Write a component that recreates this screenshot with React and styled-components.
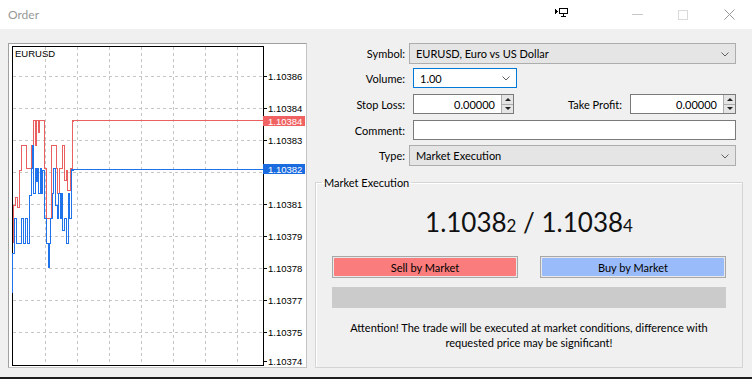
import styled, { createGlobalStyle } from "styled-components";

const GlobalStyle = createGlobalStyle`
  html, body {
    margin: 0;
    padding: 0;
    background: #1e1e1e;
  }
  body {
    font-family: Lato, "Liberation Sans", sans-serif;
    font-size: 11px;
    color: #000;
  }
`;

const RED = "#ea6060";
const BLUE = "#1f72ea";

const priceLabels = [
  ["1.10386", 76],
  ["1.10384", 108],
  ["1.10383", 140],
  ["1.10381", 204],
  ["1.10379", 236],
  ["1.10378", 268],
  ["1.10377", 300],
  ["1.10375", 332],
  ["1.10374", 361],
];
const gridX = [45, 77, 109, 141, 173, 205, 237];
const gridY = [76, 108, 140, 172, 204, 236, 268, 300, 332];

// step series drawn left of the current price, in page pixels
const askPath =
  "M13.5,243 V205 H15.5 V197 H17.5 V207 H19.5 V170 H21.5 V145 H26.5 V168 H31.5 V145 H33.5 V120 H35.5 V145 H36.5 V120 H38.5 V132 H39.5 V120.5 H44.5 V168 H46.5 V218 H51.5 V145 H56.5 V168 H57.5 V193 H59.5 V168 H62.5 V145 H64.5 V180 H66.5 V170 H67.5 V190 H70.5 V168 H72.5 V121 H74";
const bidPath =
  "M12.5,293 V253 H14.5 V218 H16.5 V243 H21.5 V218 H23.5 V243 H25.5 V218 H27.5 V243 H29.5 V195 H31.5 V168 H32.5 V145 H33.5 V193 H35.5 V168 H36.5 V181 H37.5 V168 H38.5 V193 H40.5 V168 H41.5 V193 H42.5 V170 H44.5 V218 H46.5 V243 H48.5 V267 H49.5 V243 H50.5 V218 H52.5 V193 H53.5 V168 H55.5 V205 H57.5 V218 H58.5 V193 H60.5 V218 H61.5 V193 H62.5 V230 H64.5 V218 H66.5 V243 H68.5 V193 H69.5 V218 H71.5 V170 H74";

const Window = styled.div`
  width: 752px;
  height: 377px;
  background: #f0f0f0;
  display: flex;
  flex-direction: column;
`;

const TitleBar = styled.div`
  height: 29px;
  flex-shrink: 0;
  background: #fff;
  display: flex;
  align-items: center;
`;

const Title = styled.div`
  flex: 1;
  padding-left: 8px;
  color: #999;
  font-size: 12px;
`;

const MonitorSlot = styled.div`
  width: 14px;
  height: 29px;
  display: flex;
  align-items: center;
  margin-right: 45px;
  padding-bottom: 4px;
  box-sizing: border-box;
`;

const CaptionButton = styled.div`
  width: 46px;
  height: 29px;
  display: flex;
  align-items: center;
  justify-content: center;
`;

const Body = styled.div`
  flex: 1;
  display: flex;
  gap: 8px;
  padding: 14px 9px 0 8px;
`;

const ChartPanel = styled.div`
  width: 299px;
  height: 325px;
  box-sizing: border-box;
  background: #fff;
  border: 1px solid #c4c4c4;
  border-left-color: #a0a0a0;
  border-top-color: #a0a0a0;
  flex-shrink: 0;

  svg {
    display: block;
  }
`;

const RightPanel = styled.div`
  width: 428px;
  display: flex;
  flex-direction: column;
`;

const Row = styled.div`
  display: flex;
  align-items: center;
  height: ${(p) => p.$h || 20}px;
  margin-top: ${(p) => p.$mt || 0}px;
  padding-right: 7px;
`;

const Label = styled.div`
  width: ${(p) => p.$w || 90}px;
  flex: ${(p) => (p.$grow ? 1 : "none")};
  text-align: right;
  white-space: nowrap;
`;

const Combo = styled.div`
  position: relative;
  box-sizing: border-box;
  height: 100%;
  width: ${(p) => p.$w}px;
  margin-left: ${(p) => p.$ml}px;
  display: flex;
  align-items: center;
  padding-left: 6px;
  background: ${(p) => (p.$editable ? "#fff" : "#e5e5e5")};
  border: 1px solid ${(p) => (p.$focused ? "#0078d7" : "#adadad")};
`;

const Chevron = styled.svg`
  position: absolute;
  right: 6px;
  top: 50%;
  margin-top: -2px;
`;

const TextBox = styled.div`
  box-sizing: border-box;
  height: 100%;
  width: ${(p) => p.$w}px;
  margin-left: ${(p) => p.$ml}px;
  background: #fff;
  border: 1px solid #7a7a7a;
  display: flex;
  align-items: center;
  justify-content: flex-end;
`;

const NumberText = styled.span`
  padding-right: 6px;
`;

const Spin = styled.div`
  width: 12px;
  height: 100%;
  box-sizing: border-box;
  display: flex;
  flex-direction: column;
  border-left: 1px solid #adadad;
  background: #e5e5e5;
`;

const SpinHalf = styled.div`
  flex: 1;
  display: flex;
  align-items: center;
  justify-content: center;
  border-top: ${(p) => (p.$down ? "1px solid #adadad" : "none")};

  &::after {
    content: "";
    border-left: 3px solid transparent;
    border-right: 3px solid transparent;
    ${(p) =>
      p.$down ? "border-top: 3px solid #222;" : "border-bottom: 3px solid #222;"}
  }
`;

const Group = styled.fieldset`
  margin: 9px 0 0 0;
  padding: 0 16px;
  border: 1px solid #d5d5d5;
  box-shadow: inset 1px 1px 0 #fff;
  min-width: 0;
  height: 193px;
  box-sizing: border-box;
  display: flex;
  flex-direction: column;
`;

const Legend = styled.legend`
  margin-left: -10px;
  padding: 0 2px;
  line-height: 15px;
`;

const Price = styled.div`
  margin-top: 16px;
  text-align: center;
  font-size: 26px;
  line-height: 32px;
  color: #111;
`;

const Pip = styled.span`
  font-size: 17px;
`;

const Buttons = styled.div`
  display: flex;
  justify-content: space-between;
  margin-top: 14px;
`;

const TradeButton = styled.div`
  width: 186px;
  height: 22px;
  box-sizing: border-box;
  border: 1px solid #a8a8a8;
  padding: 1px;
  background: #e8e8e8;

  span {
    display: flex;
    align-items: center;
    justify-content: center;
    height: 100%;
    background: ${(p) => p.$color};
    border-radius: 1px;
  }
`;

const Progress = styled.div`
  height: 21px;
  margin-top: 9px;
  background: #cbcbcb;
`;

const Note = styled.div`
  margin-top: 12px;
  text-align: center;
  line-height: 15px;
`;

const ChevronIcon = () => (
  <Chevron width="8" height="5" viewBox="0 0 8 5">
    <polyline points="0.5,0.5 4,4 7.5,0.5" fill="none" stroke="#606060" strokeWidth="1" />
  </Chevron>
);

const SpinButtons = () => (
  <Spin>
    <SpinHalf />
    <SpinHalf $down />
  </Spin>
);

const labelFont = "'Liberation Sans', sans-serif";

const Chart = () => (
  <svg width="297" height="323" viewBox="9 44 297 323">
    <g shapeRendering="crispEdges">
      {gridX.map((x) => (
        <line key={x} x1={x + 0.5} y1="47" x2={x + 0.5} y2="365" stroke="#c6c6c6" strokeDasharray="3 3" />
      ))}
      {gridY.map((y) => (
        <line key={y} x1="13" y1={y + 0.5} x2="263" y2={y + 0.5} stroke="#c6c6c6" strokeDasharray="3 3" />
      ))}
      <rect x="12.5" y="46.5" width="251" height="319" fill="none" stroke="#000" />
      {priceLabels.map(([t, y]) => (
        <rect key={t} x="263" y={y} width="4" height="1" fill="#000" />
      ))}
      <path d={askPath} fill="none" stroke={RED} />
      <path d={bidPath} fill="none" stroke={BLUE} />
      <rect x="72" y="120" width="191" height="1" fill={RED} />
      <rect x="71" y="169" width="192" height="1" fill={BLUE} />
      <rect x="263" y="116" width="42" height="10" fill="#f06262" />
      <rect x="263" y="164" width="42" height="10" fill="#1a6be0" />
    </g>
    <text x="15" y="57" fontSize="9.5" fontFamily={labelFont}>EURUSD</text>
    {priceLabels.map(([t, y]) => (
      <text key={t} x="268" y={y + 3.5} fontSize="9.5" fontFamily={labelFont}>{t}</text>
    ))}
    <text x="268" y="124.5" fontSize="9.5" fill="#fff" fontFamily={labelFont}>1.10384</text>
    <text x="268" y="172.5" fontSize="9.5" fill="#fff" fontFamily={labelFont}>1.10382</text>
  </svg>
);

export default function App() {
  return (
    <>
      <GlobalStyle />
      <Window>
        <TitleBar>
          <Title>Order</Title>
          <MonitorSlot>
            <svg width="13" height="9" viewBox="0 0 13 9" shapeRendering="crispEdges">
              <polygon points="0,1 3,3.5 0,6" fill="#000" />
              <rect x="4.5" y="0.5" width="8" height="5" fill="none" stroke="#000" />
              <rect x="8" y="6" width="1" height="2" fill="#000" />
              <rect x="6" y="8" width="5" height="1" fill="#000" />
            </svg>
          </MonitorSlot>
          <CaptionButton>
            <svg width="11" height="1">
              <rect width="11" height="1" fill="#c8c8c8" />
            </svg>
          </CaptionButton>
          <CaptionButton>
            <svg width="10" height="10" shapeRendering="crispEdges">
              <rect x="0.5" y="0.5" width="9" height="9" fill="none" stroke="#dadada" />
            </svg>
          </CaptionButton>
          <CaptionButton>
            <svg width="11" height="11">
              <path d="M0.5,0.5 L10.5,10.5 M10.5,0.5 L0.5,10.5" stroke="#9a9a9a" strokeWidth="1" />
            </svg>
          </CaptionButton>
        </TitleBar>
        <Body>
          <ChartPanel>
            <Chart />
          </ChartPanel>
          <RightPanel>
            <Row $h={21}>
              <Label>Symbol:</Label>
              <Combo $w={327} $ml={4}>
                EURUSD, Euro vs US Dollar
                <ChevronIcon />
              </Combo>
            </Row>
            <Row $mt={4}>
              <Label>Volume:</Label>
              <Combo $w={104} $ml={8} $editable $focused>
                1.00
                <ChevronIcon />
              </Combo>
            </Row>
            <Row $mt={6}>
              <Label>Stop Loss:</Label>
              <TextBox $w={101} $ml={8}>
                <NumberText>0.00000</NumberText>
                <SpinButtons />
              </TextBox>
              <Label $grow>Take Profit:</Label>
              <TextBox $w={106} $ml={8}>
                <NumberText>0.00000</NumberText>
                <SpinButtons />
              </TextBox>
            </Row>
            <Row $mt={6}>
              <Label>Comment:</Label>
              <TextBox $w={323} $ml={8} />
            </Row>
            <Row $mt={5} $h={21}>
              <Label>Type:</Label>
              <Combo $w={327} $ml={4}>
                Market Execution
                <ChevronIcon />
              </Combo>
            </Row>
            <Group>
              <Legend>Market Execution</Legend>
              <Price>
                1.1038<Pip>2</Pip> / 1.1038<Pip>4</Pip>
              </Price>
              <Buttons>
                <TradeButton $color="#fb7c7c">
                  <span>Sell by Market</span>
                </TradeButton>
                <TradeButton $color="#9abbf9">
                  <span>Buy by Market</span>
                </TradeButton>
              </Buttons>
              <Progress />
              <Note>
                Attention! The trade will be executed at market conditions, difference with
                <br />
                requested price may be significant!
              </Note>
            </Group>
          </RightPanel>
        </Body>
      </Window>
    </>
  );
}
